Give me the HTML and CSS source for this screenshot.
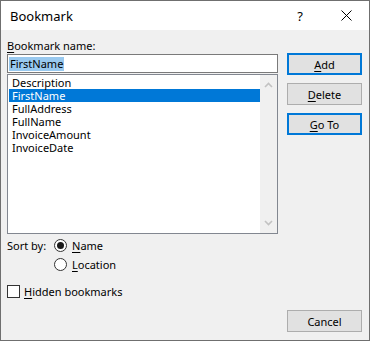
FILE: index.html
```html
<!DOCTYPE html>
<html lang="en">
<head>
    <meta charset="UTF-8">
    <title>Bookmark</title>
    <link rel="stylesheet" href="styles.css">
</head>
<body>
    <div class="dialog">
        <div class="titlebar">
            <span class="title">Bookmark</span>
            <span class="caption-btn help">?</span>
            <span class="caption-btn close">
                <svg width="11" height="11" viewBox="0 0 11 11">
                    <path d="M0.5 0.5 L10.5 10.5 M10.5 0.5 L0.5 10.5" stroke="#000" stroke-width="1" fill="none"/>
                </svg>
            </span>
        </div>
        <div class="content">
            <div class="left">
                <div class="field-label"><u>B</u>ookmark name:</div>
                <div class="name-input"><span class="selected-text">FirstName</span></div>
                <div class="listbox">
                    <ul class="items">
                        <li>Description</li>
                        <li class="selected">FirstName</li>
                        <li>FullAddress</li>
                        <li>FullName</li>
                        <li>InvoiceAmount</li>
                        <li>InvoiceDate</li>
                    </ul>
                    <div class="scrollbar">
                        <svg width="9" height="6" viewBox="0 0 9 6">
                            <polyline points="1,5 4.5,1.5 8,5" stroke="#c2c2c2" stroke-width="1.6" fill="none"/>
                        </svg>
                        <svg width="9" height="6" viewBox="0 0 9 6">
                            <polyline points="1,1 4.5,4.5 8,1" stroke="#c2c2c2" stroke-width="1.6" fill="none"/>
                        </svg>
                    </div>
                </div>
                <div class="sort">
                    <span class="sort-label">Sort by:</span>
                    <div class="radios">
                        <div class="option"><span class="radio checked"></span><span><u>N</u>ame</span></div>
                        <div class="option"><span class="radio"></span><span><u>L</u>ocation</span></div>
                    </div>
                </div>
                <div class="option check-row"><span class="checkbox"></span><span><u>H</u>idden bookmarks</span></div>
            </div>
            <div class="right">
                <div class="button default"><u>A</u>dd</div>
                <div class="button"><u>D</u>elete</div>
                <div class="button default"><u>G</u>o To</div>
                <div class="button cancel">Cancel</div>
            </div>
        </div>
    </div>
</body>
</html>
```

FILE: styles.css
```css
body {
    margin: 0;
    background-color: #ffffff;
    font-family: 'Noto Sans', sans-serif;
    font-size: 11px;
    color: #000000;
}

u {
    text-underline-offset: 2px;
}

.dialog {
    width: 370px;
    height: 341px;
    box-sizing: border-box;
    border: 1px solid #6f6f6f;
    background-color: #f0f0f0;
    display: flex;
    flex-direction: column;
}

.titlebar {
    height: 29px;
    background-color: #ffffff;
    display: flex;
    align-items: center;
}

.title {
    flex: 1;
    padding-left: 9px;
    font-size: 13px;
}

.caption-btn {
    width: 46px;
    height: 29px;
    display: flex;
    align-items: center;
    justify-content: center;
}

.help {
    font-size: 13px;
}

.content {
    flex: 1;
    display: flex;
    gap: 9px;
    padding: 0 7px 0 6px;
}

.left {
    width: 271px;
    display: flex;
    flex-direction: column;
}

.field-label {
    margin-top: 8px;
    line-height: 15px;
}

.name-input {
    margin-top: 1px;
    height: 19px;
    box-sizing: border-box;
    border: 1px solid #7a7a7a;
    background-color: #ffffff;
    padding: 1px 0 0 1px;
}

.selected-text {
    display: inline-block;
    background-color: #99c9ef;
    line-height: 14px;
    height: 14px;
    padding: 0 1px;
}

.listbox {
    margin-top: 1px;
    height: 160px;
    box-sizing: border-box;
    border: 1px solid #828790;
    background-color: #ffffff;
    display: flex;
}

.items {
    flex: 1;
    list-style: none;
    margin: 0;
    padding: 1px 0 0 1px;
}

.items li {
    height: 13px;
    line-height: 13px;
    padding-left: 3px;
}

.items .selected {
    background-color: #0078d7;
    color: #ffffff;
}

.scrollbar {
    width: 17px;
    background-color: #f0f0f0;
    display: flex;
    flex-direction: column;
    align-items: center;
    justify-content: space-between;
    padding: 7px 0 7px 0;
}

.sort {
    margin-top: 5px;
    display: flex;
}

.sort-label {
    width: 47px;
    line-height: 13px;
}

.radios {
    display: flex;
    flex-direction: column;
    gap: 6px;
}

.option {
    display: flex;
    align-items: center;
    gap: 5px;
    line-height: 13px;
}

.radio {
    width: 13px;
    height: 13px;
    box-sizing: border-box;
    border: 1px solid #333333;
    border-radius: 50%;
    background-color: #ffffff;
    display: flex;
    align-items: center;
    justify-content: center;
}

.radio.checked::after {
    content: "";
    width: 7px;
    height: 7px;
    border-radius: 50%;
    background-color: #1a1a1a;
}

.check-row {
    margin-top: 14px;
    gap: 4px;
}

.checkbox {
    width: 13px;
    height: 13px;
    box-sizing: border-box;
    border: 1px solid #333333;
    background-color: #ffffff;
}

.right {
    width: 75px;
    display: flex;
    flex-direction: column;
    gap: 8px;
    padding-top: 23px;
    padding-bottom: 8px;
}

.button {
    height: 22px;
    box-sizing: border-box;
    border: 1px solid #adadad;
    background-color: #e1e1e1;
    display: flex;
    align-items: center;
    justify-content: center;
}

.button.default {
    border: 2px solid #0078d7;
}

.button.cancel {
    margin-top: auto;
}
```
